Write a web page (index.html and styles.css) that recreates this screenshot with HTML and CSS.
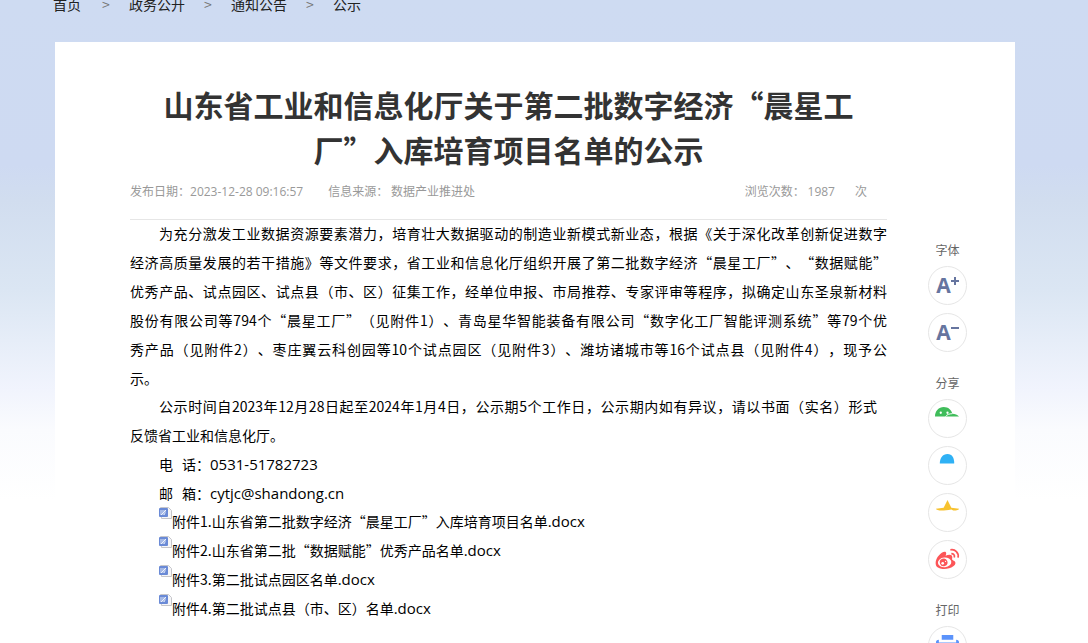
FILE: index.html
```html
<!DOCTYPE html>
<html lang="zh-CN">
<head>
  <meta charset="UTF-8">
  <meta name="viewport" content="width=device-width, initial-scale=1.0">
  <title>山东省工业和信息化厅</title>
  <link rel="stylesheet" href="styles.css">
</head>
<body>
  <div class="page">
    <nav class="crumbs">
      <a href="#">首页</a><span class="sep">&gt;</span>
      <a href="#">政务公开</a><span class="sep">&gt;</span>
      <a href="#">通知公告</a><span class="sep">&gt;</span>
      <a href="#">公示</a>
    </nav>

    <main class="card">
      <article class="article">
        <h1>山东省工业和信息化厅关于第二批数字经济“晨星工厂”入库培育项目名单的公示</h1>

        <div class="meta">
          <span>发布日期：<span class="latin">2023-12-28 09:16:57</span></span>
          <span class="source">信息来源： 数据产业推进处</span>
          <span class="views">浏览次数： <span class="latin">1987</span></span>
          <span>次</span>
        </div>

        <div class="content">
          <p>
            <span class="line first">为充分激发工业数据资源要素潜力，培育壮大数据驱动的制造业新模式新业态，根据《关于深化改革创新促进数字</span>
            <span class="line">经济高质量发展的若干措施》等文件要求，省工业和信息化厅组织开展了第二批数字经济“晨星工厂”、“数据赋能”</span>
            <span class="line">优秀产品、试点园区、试点县（市、区）征集工作，经单位申报、市局推荐、专家评审等程序，拟确定山东圣泉新材料</span>
            <span class="line">股份有限公司等794个“晨星工厂”（见附件1）、青岛星华智能装备有限公司“数字化工厂智能评测系统”等79个优</span>
            <span class="line">秀产品（见附件2）、枣庄翼云科创园等10个试点园区（见附件3）、潍坊诸城市等16个试点县（见附件4），现予公</span>
            <span class="line last">示。</span>
          </p>
          <p>
            <span class="line first short">公示时间自2023年12月28日起至2024年1月4日，公示期5个工作日，公示期内如有异议，请以书面（实名）形式</span>
            <span class="line last">反馈省工业和信息化厅。</span>
          </p>
          <p class="contact"><span class="label"><span>电</span><span>话：</span></span><span class="latin">0531-51782723</span></p>
          <p class="contact"><span class="label"><span>邮</span><span>箱：</span></span><span class="latin">cytjc@shandong.cn</span></p>
          <ul class="files">
            <li><svg class="doc" viewBox="0 0 13 13"><use href="#word"/></svg><a href="#">附件1.山东省第二批数字经济“晨星工厂”入库培育项目名单<span class="latin">.docx</span></a></li>
            <li><svg class="doc" viewBox="0 0 13 13"><use href="#word"/></svg><a href="#">附件2.山东省第二批“数据赋能”优秀产品名单<span class="latin">.docx</span></a></li>
            <li><svg class="doc" viewBox="0 0 13 13"><use href="#word"/></svg><a href="#">附件3.第二批试点园区名单<span class="latin">.docx</span></a></li>
            <li><svg class="doc" viewBox="0 0 13 13"><use href="#word"/></svg><a href="#">附件4.第二批试点县（市、区）名单<span class="latin">.docx</span></a></li>
          </ul>
        </div>
      </article>

      <aside class="tools">
        <section>
          <h2>字体</h2>
          <button type="button" class="font-btn" aria-label="放大字体">A<svg viewBox="0 0 8 8"><path d="M4 0v8M0 4h8"/></svg></button>
          <button type="button" class="font-btn" aria-label="缩小字体">A<svg viewBox="0 0 8 8"><path d="M0 4h8"/></svg></button>
        </section>
        <section>
          <h2>分享</h2>
          <button type="button" aria-label="微信">
            <svg viewBox="0 0 26 26">
              <path fill="#40bd5b" d="M0 11C0 5 4 1 9 1c5 0 8 3 9 7 3 0 5 1 7 3z"/>
              <path fill="none" stroke="#fff" d="M11 11c1-2 4-3 7-3"/>
              <circle cx="6" cy="7" r="1.200" fill="#fff"/>
              <circle cx="13" cy="7" r="1.200" fill="#fff"/>
            </svg>
          </button>
          <button type="button" aria-label="QQ">
            <svg viewBox="0 0 26 26"><path fill="#2fb1f5" d="M5 11c0-6 3-10 8-10s7 4 7 10z"/></svg>
          </button>
          <button type="button" aria-label="QQ空间">
            <svg viewBox="0 0 26 26"><path fill="#f7c22f" d="M13 0l4 8 8 1c0 1-2 2-6 2l-2-1c-4 1-7 1-10 1-3 0-6-1-6-2l8-1z"/></svg>
          </button>
          <button type="button" aria-label="微博">
            <svg viewBox="0 0 26 26">
              <path fill="#fc5558" d="M10 5c2 0 2 2 1 4 3-1 7-2 7 2 0 1-1 2 1 3 3 1 3 4 0 6-5 4-16 4-18-1C-1 13 6 5 10 5z"/>
              <ellipse cx="10" cy="16" rx="7" ry="5" fill="#fff" transform="rotate(-6 10 16)"/>
              <ellipse cx="9" cy="16" rx="4" ry="4" fill="#fc5558" transform="rotate(-20 9 16)"/>
              <circle cx="8" cy="17" r="1.4" fill="#fff"/>
              <circle cx="11" cy="15" r=".6" fill="#fff"/>
              <path fill="none" stroke="#fc5558" stroke-width="1.8" d="M16 3c5-1 9 3 8 8M17 7c2 0 4 1 3 4"/>
            </svg>
          </button>
        </section>
        <section>
          <h2>打印</h2>
          <button type="button" aria-label="打印">
            <svg viewBox="0 0 26 26"><path fill="#5b93fb" d="M7 2h12v5H7zM1 10c0-2 1-3 3-3v3h18V7c2 0 3 1 3 3v9H1z"/></svg>
          </button>
        </section>
      </aside>
    </main>
  </div>

  <svg class="defs" aria-hidden="true">
    <symbol id="word" viewBox="0 0 13 13">
      <path fill="#f6f6f8" stroke="#c6c6ca" d="M1.500 .5h8l3 3v8h-10z"/>
      <rect x="0" y="1" width="9" height="9" rx="1" fill="#6a8ad6"/>
      <path fill="none" stroke="#fff" stroke-width=".8" d="M2 3v5M4 3v5M6 3v3l-1 2M2 8l5-5"/>
    </symbol>
  </svg>
</body>
</html>
```

FILE: styles.css
```css
* {
  box-sizing: border-box;
}

body {
  margin: 0;
  height: 100vh;
  overflow: hidden;
  font-family: "Noto Sans CJK SC", sans-serif;
  font-size: 14px;
  color: #000;
  text-spacing-trim: space-all;
  background: #fff linear-gradient(#cedbf2 0, #cedaf2 165px, #d1ddef 200px, #dbe6f3 290px, #f1f4fd 390px, #fafbfe 430px, #fff 500px) no-repeat;
}

h1, h2, p, ul {
  margin: 0;
  padding: 0;
}

a {
  color: inherit;
  text-decoration: none;
}

.latin {
  font-family: "Open Sans", "Noto Sans CJK SC", sans-serif;
}

.page {
  padding: 0 73px 0 55px;
}

/* breadcrumb */
.crumbs {
  display: flex;
  gap: 19px;
  margin: -6px 0 28px -2px;
  line-height: 20px;
  color: #222;
}

.crumbs a:first-child {
  padding-right: 2px;
}

.crumbs .sep {
  width: 8px;
  font-size: 14px;
  color: #777;
}

.card {
  display: flex;
  gap: 41px;
  padding: 40px 48px 40px 75px;
  background: #fff;
}

.article {
  flex: 1;
  min-width: 0;
}

h1 {
  padding: 0 30px;
  font-size: 30px;
  line-height: 45px;
  text-align: center;
  color: #333;
}

.meta {
  display: flex;
  gap: 20px;
  height: 48px;
  padding-right: 20px;
  font-size: 12px;
  line-height: 38px;
  color: #999;
  border-bottom: 1px solid #e6e6e6;
}

.meta .source {
  margin-left: 5px;
}

.meta .views {
  margin-left: auto;
}

/* body text */
.content {
  margin-top: -1px;
  line-height: 29px;
}

.content p + p:not(.contact),
.content .files {
  margin-top: -1px;
}

.content .latin {
  font-size: 15px;
}

.line {
  display: block;
  text-align: justify;
  text-align-last: justify;
  white-space: nowrap;
}

.line.first {
  padding-left: 29px;
}

.line.short {
  padding-right: 10px;
}

.line.last {
  text-align-last: left;
}

.contact {
  display: flex;
  padding-left: 29px;
}

.contact .label {
  display: flex;
  gap: 9px;
}

.files {
  padding-left: 29px;
  list-style: none;
}

.files li {
  display: flex;
  height: 29px;
}

.doc {
  width: 13px;
  height: 13px;
}

/* side tools */
.tools {
  display: flex;
  flex-direction: column;
  gap: 21px;
  width: 39px;
  padding-top: 158px;
}

.tools section {
  display: flex;
  flex-direction: column;
  gap: 8px;
}

.tools h2 {
  font-size: 12px;
  font-weight: normal;
  line-height: 20px;
  margin-bottom: -2px;
  text-align: center;
  color: #666;
}

.tools button {
  display: flex;
  align-items: center;
  justify-content: center;
  width: 39px;
  height: 39px;
  padding: 0;
  background: #fff;
  border: 1px solid #e6e6e6;
  border-radius: 50%;
}

.tools button svg {
  width: 25px;
  height: 25px;
}

.tools .font-btn {
  padding-bottom: 2px;
  font-family: "Open Sans", sans-serif;
  font-size: 21px;
  font-weight: bold;
  color: #66759f;
}

.tools .font-btn svg {
  width: 8px;
  height: 8px;
  margin-bottom: 8px;
  fill: none;
  stroke: #66759f;
  stroke-width: 2;
}

.defs {
  display: none;
}
```
